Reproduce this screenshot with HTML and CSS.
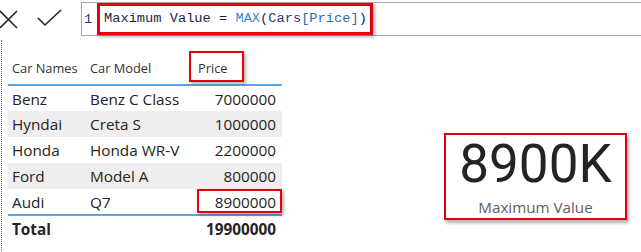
FILE: index.html
```html
<!DOCTYPE html>
<html lang="en">

<head>
    <meta charset="UTF-8">
    <meta name="viewport" content="width=device-width, initial-scale=1.0">
    <title>Maximum Value</title>
    <link rel="stylesheet" href="styles.css">
</head>

<body>
    <div class="formula-bar">
        <div class="actions">
            <svg class="icon icon-cancel" width="20" height="20" viewBox="0 0 20 20">
                <path d="M1 2 L18 19 M18 2 L1 19" />
            </svg>
            <svg class="icon icon-commit" width="26" height="20" viewBox="0 0 26 20">
                <path d="M1 9 L8 16 L24 1" />
            </svg>
        </div>
        <div class="editor">
            <span class="line-no">1</span>
            <span class="expr">Maximum Value = <span class="fn">MAX</span>(<span class="tbl">Cars</span><span class="col">[Price]</span>)</span>
        </div>
    </div>

    <div class="canvas">
        <div class="table-visual">
            <table class="grid">
                <thead>
                    <tr>
                        <th>Car Names</th>
                        <th>Car Model</th>
                        <th class="num-head mark mark-head">Price</th>
                    </tr>
                </thead>
                <tbody>
                    <tr>
                        <td>Benz</td>
                        <td>Benz C Class</td>
                        <td class="num">7000000</td>
                    </tr>
                    <tr class="alt">
                        <td>Hyndai</td>
                        <td>Creta S</td>
                        <td class="num">1000000</td>
                    </tr>
                    <tr>
                        <td>Honda</td>
                        <td>Honda WR-V</td>
                        <td class="num">2200000</td>
                    </tr>
                    <tr class="alt">
                        <td>Ford</td>
                        <td>Model A</td>
                        <td class="num">800000</td>
                    </tr>
                    <tr>
                        <td>Audi</td>
                        <td>Q7</td>
                        <td class="num mark mark-cell">8900000</td>
                    </tr>
                </tbody>
                <tfoot>
                    <tr>
                        <td>Total</td>
                        <td></td>
                        <td class="num">19900000</td>
                    </tr>
                </tfoot>
            </table>
        </div>

        <div class="card">
            <div class="card-value">8900K</div>
            <div class="card-label">Maximum Value</div>
        </div>
    </div>
</body>

</html>
```

FILE: styles.css
```css
* {
    margin: 0;
    padding: 0;
    box-sizing: border-box;
}

html,
body {
    width: 641px;
    height: 252px;
    background: #fff;
    overflow: hidden;
}

body {
    font-family: "Open Sans", "Noto Sans", sans-serif;
    color: #252423;
}

/* formula bar */
.formula-bar {
    display: flex;
    align-items: flex-start;
    height: 40px;
}

.actions {
    display: flex;
    align-items: center;
    gap: 18px;
    width: 81px;
    height: 38px;
}

.icon path {
    fill: none;
    stroke: #252423;
    stroke-width: 1.6;
}

.icon-cancel {
    margin-left: -1px;
}

.editor {
    flex: 1;
    display: flex;
    align-items: center;
    height: 34px;
    margin-top: 2px;
    margin-right: -20px;
    border: 1px solid #a6a6a6;
    font-family: "Liberation Mono", monospace;
    font-size: 13.7px;
    color: #1e2a44;
}

.line-no {
    width: 15px;
    padding-left: 2px;
    color: #1d3f73;
}

.expr {
    display: inline-block;
    padding: 3px 3px 3px 4px;
    border: 3px solid #e5000f;
    box-shadow: 2px 2px 3px rgba(0, 0, 0, 0.3);
    line-height: 20px;
    color: #1f1f3d;
}

.fn {
    color: #3f86d6;
}

.tbl {
    color: #1d4070;
}

.col {
    color: #2c6ab0;
}

/* report canvas */
.canvas {
    display: flex;
    align-items: flex-start;
    height: 212px;
    margin-left: 1px;
    border-left: 1px dotted #6e6e6e;
}

.table-visual {
    padding-top: 9px;
    padding-left: 6px;
}

.grid {
    border-collapse: collapse;
    width: 274px;
}

.grid th {
    height: 36px;
    padding: 0 0 7px 4px;
    text-align: left;
    vertical-align: bottom;
    font-size: 12.8px;
    font-weight: normal;
    color: #333;
    border-bottom: 2px solid #5fa3e0;
}

.grid th:nth-child(1),
.grid td:nth-child(1) {
    width: 78px;
}

.grid th:nth-child(2),
.grid td:nth-child(2) {
    width: 104px;
}

.grid th.num-head {
    padding-left: 8px;
}

.grid td {
    height: 26px;
    padding: 0 0 0 4px;
    font-size: 15.3px;
    vertical-align: middle;
    white-space: nowrap;
}

.grid td.num {
    text-align: right;
    padding-right: 6px;
}

.grid tbody tr.alt td {
    background: #eeeeee;
}

.grid tbody tr:last-child td {
    border-bottom: 2px solid #5fa3e0;
}

.grid tfoot td {
    height: 26px;
    font-weight: bold;
}

/* red highlight boxes drawn over cells */
.mark {
    position: relative;
}

.mark::after {
    content: "";
    position: absolute;
    border: 2px solid #e5000f;
    box-shadow: 2px 2px 3px rgba(0, 0, 0, 0.3);
}

.mark-head::after {
    left: -1px;
    top: 2px;
    width: 51px;
    height: 27px;
}

.mark-cell::after {
    left: 7px;
    right: 0;
    top: 0;
    bottom: 1px;
}

/* card visual */
.card {
    display: flex;
    flex-direction: column;
    align-items: center;
    width: 183px;
    height: 87px;
    margin-left: auto;
    margin-right: 14px;
    margin-top: 93px;
    border: 2px solid #e5000f;
    box-shadow: 2px 3px 3px rgba(0, 0, 0, 0.3);
}

.card-value {
    font-family: Roboto, sans-serif;
    font-weight: 400;
    font-size: 53px;
    line-height: 56px;
    margin-top: 1px;
    color: #252423;
}

.card-label {
    font-size: 15.2px;
    line-height: 20px;
    margin-top: 5px;
    color: #605e5c;
}
```
